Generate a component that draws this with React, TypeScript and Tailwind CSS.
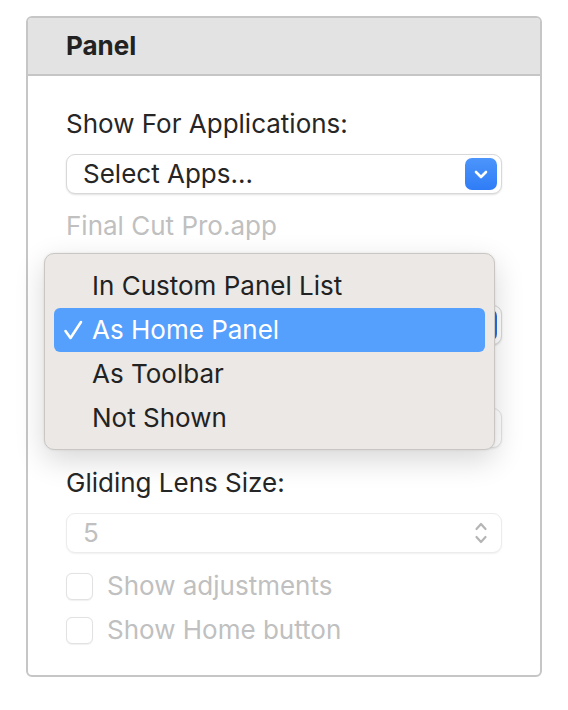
import React from 'react';

const font = { fontFamily: 'Inter, "Noto Sans", sans-serif' };

function ChevronDown() {
  return (
    <svg width="14" height="9" viewBox="0 0 14 9" fill="none">
      <path d="M2 2l5 5 5-5" stroke="white" strokeWidth="2.6" strokeLinecap="round" strokeLinejoin="round" />
    </svg>
  );
}

function Stepper() {
  return (
    <svg width="14" height="24" viewBox="0 0 14 24" fill="none">
      <path d="M2.5 8l4.5-5 4.5 5" stroke="#b5b5b5" strokeWidth="2.2" strokeLinecap="round" strokeLinejoin="round" />
      <path d="M2.5 16l4.5 5 4.5-5" stroke="#b5b5b5" strokeWidth="2.2" strokeLinecap="round" strokeLinejoin="round" />
    </svg>
  );
}

function Check() {
  return (
    <svg width="20" height="20" viewBox="0 0 20 20" fill="none">
      <path d="M2.5 11l5 7L18 2" stroke="white" strokeWidth="2.6" strokeLinecap="round" strokeLinejoin="round" />
    </svg>
  );
}

function PopupButton({ label, dark }: { label?: string; dark?: boolean }) {
  return (
    <div className="h-[40px] w-full rounded-[9px] bg-white border border-[#d8d8d8] shadow-[0_1px_2px_rgba(0,0,0,0.12)] flex items-center justify-between pl-[16px] pr-[4px]">
      <span className="text-[26px] leading-[32px] text-[#262626]">{label}</span>
      <div
        className={
          dark
            ? 'w-[32px] h-[32px] rounded-[7px] bg-[#2a6fe6] flex items-center justify-center'
            : 'w-[32px] h-[32px] rounded-[7px] bg-gradient-to-b from-[#4c95fc] to-[#2f7cf6] flex items-center justify-center'
        }
      >
        <ChevronDown />
      </div>
    </div>
  );
}

function CheckRow({ label, className }: { label: string; className: string }) {
  return (
    <div className={`flex items-center h-[32px] ${className}`}>
      <div className="w-[27px] h-[27px] rounded-[6px] border border-[#e2e2e2] bg-white shadow-[0_0.5px_1px_rgba(0,0,0,0.06)]" />
      <span className="ml-[14px] text-[26px] leading-[32px] text-[#c0c0c0]">{label}</span>
    </div>
  );
}

const items = ['In Custom Panel List', 'As Home Panel', 'As Toolbar', 'Not Shown'];

export default function App() {
  return (
    <div className="w-[568px] h-[710px] bg-white pt-[16px] pl-[26px]" style={font}>
      <div className="relative w-[516px] border-2 border-[#c6c6c6] rounded-[6px]">
        {/* Header */}
        <div className="h-[58px] bg-[#e3e3e3] border-b-2 border-[#c6c6c6] rounded-t-[4px] flex items-center px-[38px]">
          <span className="text-[26px] leading-[32px] font-bold text-[#222]">Panel</span>
        </div>

        {/* Body */}
        <div className="flex flex-col px-[38px] pt-[32px] pb-[29px]">
          <div className="text-[26px] leading-[32px] text-[#262626]">Show For Applications:</div>
          <div className="mt-[14px]">
            <PopupButton label="Select Apps..." />
          </div>
          <div className="mt-[16px] text-[26px] leading-[32px] text-[#c0c0c0]">Final Cut Pro.app</div>

          {/* rows hidden behind the open menu */}
          <div className="mt-[17px] h-[32px]" />
          <div className="mt-[14px]">
            <PopupButton dark />
          </div>
          <div className="mt-[17px] h-[32px]" />
          <div className="mt-[14px] h-[40px] rounded-[9px] bg-white border border-[#e4e4e4] shadow-[0_1px_2px_rgba(0,0,0,0.08)]" />

          <div className="mt-[19px] text-[26px] leading-[32px] text-[#262626]">Gliding Lens Size:</div>
          <div className="mt-[14px] h-[40px] rounded-[9px] bg-white border border-[#ececec] shadow-[0_1px_2px_rgba(0,0,0,0.06)] flex items-center justify-between pl-[16px] pr-[13px]">
            <span className="text-[26px] leading-[32px] text-[#c0c0c0]">5</span>
            <Stepper />
          </div>

          <CheckRow label="Show adjustments" className="mt-[17px]" />
          <CheckRow label="Show Home button" className="mt-[12px]" />
        </div>

        {/* Open popup menu */}
        <div className="absolute left-[16px] top-[235px] w-[451px] rounded-[10px] bg-[#ebe8e5] border border-[#c9c6c3] shadow-[0_10px_30px_rgba(0,0,0,0.16),0_0_3px_rgba(0,0,0,0.08)] pt-[10px] pb-[9px] px-[9px]">
          {items.map((it, i) => {
            const active = i === 1;
            return (
              <div
                key={it}
                className={
                  active
                    ? 'relative h-[44px] rounded-[6px] bg-[#55a0fd] flex items-center pl-[38px]'
                    : 'relative h-[44px] flex items-center pl-[38px]'
                }
              >
                {active && (
                  <div className="absolute left-[9px] top-[12px]">
                    <Check />
                  </div>
                )}
                <span className={active ? 'text-[26px] leading-[32px] text-white' : 'text-[26px] leading-[32px] text-[#222]'}>
                  {it}
                </span>
              </div>
            );
          })}
        </div>
      </div>
    </div>
  );
}
